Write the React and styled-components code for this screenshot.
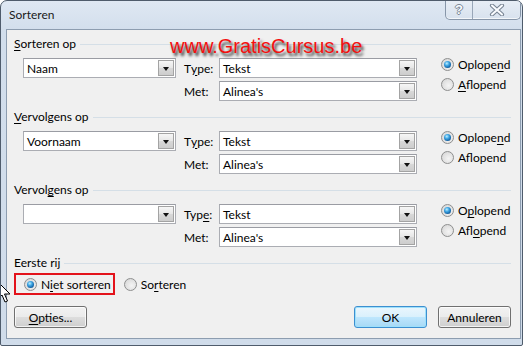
import React from 'react';
import styled, { createGlobalStyle } from 'styled-components';

const GlobalStyle = createGlobalStyle`
  html, body {
    margin: 0;
    padding: 0;
    background: #ffffff;
  }
  body {
    font-family: Lato, "Open Sans", sans-serif;
    font-size: 12px;
    color: #000;
  }
`;

const sections = [
    {
        title: ['', 'S', 'orteren op'],
        value: 'Naam',
        type: ['T', 'y', 'pe:'],
        asc: ['Oplope', 'n', 'd'],
        desc: ['', 'A', 'flopend'],
    },
    {
        title: ['', 'V', 'ervolgens op'],
        value: 'Voornaam',
        type: ['T', 'y', 'pe:'],
        asc: ['Oplope', 'n', 'd'],
        desc: ['Af', 'l', 'opend'],
    },
    {
        title: ['Vervol', 'g', 'ens op'],
        value: '',
        type: ['Typ', 'e', ':'],
        asc: ['O', 'p', 'lopend'],
        desc: ['Afl', 'o', 'pend'],
    },
];

const Mnemonic = ({ parts }) => (
    <>
        {parts[0]}
        <U>{parts[1]}</U>
        {parts[2]}
    </>
);

const DropDown = ({ value, width }) => (
    <Combo $width={width}>
        <ComboText>{value || '\u00a0'}</ComboText>
        <DropButton>
            <Arrow />
        </DropButton>
    </Combo>
);

const Radio = ({ checked, children }) => (
    <RadioItem>
        <RadioCircle $checked={checked} />
        <span>{children}</span>
    </RadioItem>
);

const App = () => (
    <>
        <GlobalStyle />
        <Window>
            <TitleBar>
                <Caption>Sorteren</Caption>
                <CaptionButtons>
                    <HelpButton>?</HelpButton>
                    <CloseButton>
                        <svg width="16" height="12" viewBox="0 0 16 12">
                            <path d="M3 1.5 L13 10.5 M13 1.5 L3 10.5" stroke="#7b8796" strokeWidth="4.2" strokeLinecap="round" />
                            <path d="M3 1.5 L13 10.5 M13 1.5 L3 10.5" stroke="#fafcff" strokeWidth="2" strokeLinecap="round" />
                        </svg>
                    </CloseButton>
                </CaptionButtons>
            </TitleBar>
            <Client>
                {sections.map((s, i) => (
                    <Section key={i}>
                        <GroupHeader>
                            <GroupLabel>
                                <Mnemonic parts={s.title} />
                            </GroupLabel>
                            <GroupLine />
                        </GroupHeader>
                        <SortRow>
                            <DropDown value={s.value} width={153} />
                            <FieldLabel>
                                <Mnemonic parts={s.type} />
                            </FieldLabel>
                            <DropDown value="Tekst" width={198} />
                            <RadioColumn>
                                <Radio checked>
                                    <Mnemonic parts={s.asc} />
                                </Radio>
                                <Radio>
                                    <Mnemonic parts={s.desc} />
                                </Radio>
                            </RadioColumn>
                            <FieldLabel>Met:</FieldLabel>
                            <DropDown value="Alinea's" width={198} />
                        </SortRow>
                    </Section>
                ))}
                <GroupHeader>
                    <GroupLabel>Eerste rij</GroupLabel>
                    <GroupLine />
                </GroupHeader>
                <HeaderRow>
                    <Highlight>
                        <Radio checked>
                            N<U>i</U>et sorteren
                        </Radio>
                    </Highlight>
                    <Radio>
                        So<U>r</U>teren
                    </Radio>
                </HeaderRow>
                <ButtonRow>
                    <Button>
                        <U>O</U>pties...
                    </Button>
                    <Spacer />
                    <Button $default>OK</Button>
                    <Button>Annuleren</Button>
                </ButtonRow>
            </Client>
            <Watermark>www.GratisCursus.be</Watermark>
            <Cursor width="14" height="24" viewBox="0 0 14 24">
                <path d="M1 1 L1 18 L5 14 L8 21 L10.5 20 L7.5 13 L13 13 Z" fill="#fff" stroke="#000" strokeWidth="1" strokeLinejoin="round" />
            </Cursor>
        </Window>
    </>
);

export default App;

const Window = styled.div`
    position: relative;
    box-sizing: border-box;
    width: 523px;
    height: 346px;
    border: 1px solid #4f5c6c;
    border-radius: 7px 7px 2px 2px;
    background: linear-gradient(#dfe8f3, #d2deec 30px, #d0dcea);
    display: flex;
    flex-direction: column;
    overflow: hidden;
`;

const TitleBar = styled.div`
    height: 28px;
    display: flex;
    align-items: flex-start;
    padding-left: 8px;
    flex: none;
`;

const Caption = styled.div`
    font-size: 12px;
    line-height: 14px;
    margin-top: 7px;
    color: #1a1a1a;
`;

const CaptionButtons = styled.div`
    margin-left: auto;
    margin-right: 1px;
    margin-top: -1px;
    display: flex;
    height: 19px;
    border: 1px solid #8796a9;
    border-top: none;
    border-radius: 0 0 5px 5px;
    background: linear-gradient(#e8eef6, #d8e2ee);
    box-shadow: inset 0 -1px 0 rgba(255, 255, 255, 0.7);
    overflow: hidden;
`;

const HelpButton = styled.div`
    width: 26px;
    border-right: 1px solid #98a6b8;
    display: flex;
    align-items: center;
    justify-content: center;
    font-family: "Liberation Sans", sans-serif;
    font-weight: bold;
    font-size: 13px;
    color: #f8fbff;
    text-shadow: 1px 0 0 #7b8796, -1px 0 0 #7b8796, 0 1px 0 #7b8796, 0 -1px 0 #7b8796;
`;

const CloseButton = styled.div`
    width: 47px;
    display: flex;
    align-items: center;
    justify-content: center;
`;

const Client = styled.div`
    flex: 1;
    margin: 0 1px 6px 5px;
    border: 1px solid #8d9db0;
    background: #f0f0f0;
    padding: 6px 9px 0 7px;
    display: flex;
    flex-direction: column;
`;

const Section = styled.section`
    margin-bottom: 8px;
`;

const GroupHeader = styled.div`
    display: flex;
    align-items: center;
    height: 16px;
`;

const GroupLabel = styled.span`
    line-height: 16px;
    white-space: nowrap;
`;

const GroupLine = styled.div`
    flex: 1;
    height: 1px;
    margin-left: 4px;
    background: #d5dfe7;
`;

const SortRow = styled.div`
    display: grid;
    grid-template-columns: 161px 35px 222px 1fr;
    grid-template-rows: 20px 20px;
    row-gap: 3px;
    margin-top: 6px;
    padding-left: 9px;

    & > :first-child {
        grid-row: 1;
        grid-column: 1;
    }
`;

const FieldLabel = styled.span`
    display: flex;
    align-items: center;
    grid-column: 2;
`;

const Combo = styled.div`
    box-sizing: border-box;
    width: ${(p) => p.$width}px;
    height: 20px;
    border: 1px solid #abadb3;
    border-top-color: #9a9ca3;
    background: #fff;
    display: flex;
    align-items: center;
`;

const ComboText = styled.span`
    flex: 1;
    padding-left: 3px;
    white-space: nowrap;
`;

const DropButton = styled.div`
    box-sizing: border-box;
    width: 16px;
    height: 16px;
    margin-right: 1px;
    border: 1px solid #a3a3a3;
    background: linear-gradient(#f6f6f6, #e6e6e6 50%, #d8d8d8 51%, #cdcdcd);
    display: flex;
    align-items: center;
    justify-content: center;
`;

const Arrow = styled.span`
    width: 0;
    height: 0;
    border-left: 3.5px solid transparent;
    border-right: 3.5px solid transparent;
    border-top: 4px solid #111;
    margin-top: 1px;
`;

const RadioColumn = styled.div`
    grid-column: 4;
    grid-row: 1 / span 2;
    display: flex;
    flex-direction: column;
    gap: 7px;
`;

const RadioItem = styled.label`
    display: flex;
    align-items: center;
    gap: 4px;
    height: 13px;
    line-height: 13px;
    white-space: nowrap;
`;

const RadioCircle = styled.span`
    position: relative;
    box-sizing: border-box;
    flex: none;
    width: 13px;
    height: 13px;
    border-radius: 50%;
    border: 1px solid #8e8f8f;
    background: radial-gradient(circle at 60% 60%, #f4f4f4 0, #e2e2e2 55%, #cfcfcf 100%);

    &::after {
        content: '';
        display: ${(p) => (p.$checked ? 'block' : 'none')};
        position: absolute;
        left: 2px;
        top: 2px;
        width: 7px;
        height: 7px;
        border-radius: 50%;
        background: radial-gradient(circle at 40% 35%, #bff0ff 0, #3fa6e4 35%, #0e5a9c 75%, #0b3f73 100%);
    }
`;

const HeaderRow = styled.div`
    display: flex;
    align-items: center;
    margin-top: 2px;
    height: 22px;
`;

const Highlight = styled.div`
    box-sizing: border-box;
    height: 22px;
    display: flex;
    align-items: center;
    border: 2px solid #e3131b;
    padding: 0 2px 0 8px;
    margin-right: 9px;
`;

const ButtonRow = styled.div`
    display: flex;
    gap: 11px;
    margin-top: 11px;
`;

const Spacer = styled.div`
    flex: 1;
`;

const Button = styled.button`
    box-sizing: border-box;
    width: 73px;
    height: 22px;
    padding: 0;
    font: inherit;
    color: #000;
    border: 1px solid ${(p) => (p.$default ? '#3c8fd0' : '#707070')};
    border-radius: 3px;
    background: ${(p) =>
        p.$default
            ? 'linear-gradient(#eaf6fd, #d9f0fc 50%, #bee6fd 51%, #a7d9f5)'
            : 'linear-gradient(#f2f2f2, #ebebeb 50%, #dddddd 51%, #cfcfcf)'};
    box-shadow: inset 0 0 0 1px ${(p) => (p.$default ? '#9ee0fb' : 'rgba(255,255,255,0.75)')};
`;

const U = styled.span`
    text-decoration: underline;
    text-underline-offset: 2px;
`;

const Watermark = styled.div`
    position: absolute;
    left: 169px;
    top: 35px;
    font-family: "Liberation Sans", Arial, sans-serif;
    font-size: 20px;
    line-height: 20px;
    color: #f40f0f;
    text-shadow: 2px 3px 3px rgba(0, 0, 0, 0.8);
    white-space: nowrap;
`;

const Cursor = styled.svg`
    position: absolute;
    left: -4px;
    top: 280px;
`;
